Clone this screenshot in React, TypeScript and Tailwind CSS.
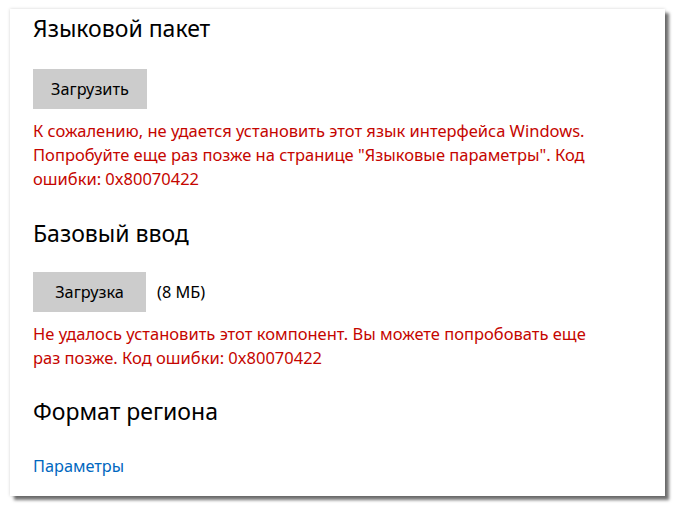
const FONT = "font-['Segoe_UI','Noto_Sans','Open_Sans',sans-serif]";

function Heading({ children }: { children: React.ReactNode }) {
  return <h2 className="text-[23px] leading-[30px] text-black">{children}</h2>;
}

function ErrorText({ lines }: { lines: string[] }) {
  return (
    <p className="text-[16.5px] leading-[24px] text-[#c50500]">
      {lines.map((l, i) => (
        <span key={i} className="block whitespace-nowrap">
          {l}
        </span>
      ))}
    </p>
  );
}

export default function App() {
  return (
    <div className={`w-[676px] h-[507px] bg-white pl-[10px] pt-[9px] ${FONT}`}>
      <div className="w-[655px] h-[487px] bg-white pl-[23px] pt-[4px] shadow-[4px_4px_3px_rgba(0,0,0,0.55),0_0_3px_rgba(0,0,0,0.18)]">
        <Heading>Языковой пакет</Heading>

        <button className="mt-[26px] w-[114px] h-[40px] bg-[#cccccc] text-[16.3px] text-black">
          Загрузить
        </button>

        <div className="mt-[10px]">
          <ErrorText
            lines={[
              "К сожалению, не удается установить этот язык интерфейса Windows.",
              'Попробуйте еще раз позже на странице "Языковые параметры". Код',
              "ошибки: 0x80070422",
            ]}
          />
        </div>

        <div className="mt-[27px]">
          <Heading>Базовый ввод</Heading>
        </div>

        <div className="mt-[24px] flex items-center gap-[11px]">
          <button className="w-[113px] h-[40px] bg-[#cccccc] text-[16.3px] text-black">
            Загрузка
          </button>
          <span className="text-[16.3px] text-black">(8 МБ)</span>
        </div>

        <div className="mt-[10px]">
          <ErrorText
            lines={[
              "Не удалось установить этот компонент. Вы можете попробовать еще",
              "раз позже. Код ошибки: 0x80070422",
            ]}
          />
        </div>

        <div className="mt-[26px]">
          <Heading>Формат региона</Heading>
        </div>

        <a href="#" className="mt-[28px] block w-fit text-[16.3px] leading-[24px] text-[#0067c0]">
          Параметры
        </a>
      </div>
    </div>
  );
}
